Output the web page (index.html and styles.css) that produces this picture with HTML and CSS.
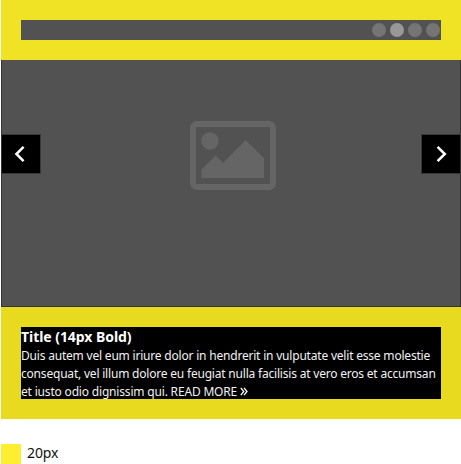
FILE: index.html
```html
<!DOCTYPE html>
<html lang="en">
<head>
<meta charset="utf-8">
<title>Carousel</title>
<link rel="stylesheet" href="styles.css">
</head>
<body>
<section class="carousel">
  <header class="header">
    <div class="pager"><i class="dot"></i><i class="dot active"></i><i class="dot"></i><i class="dot"></i></div>
  </header>
  <div class="slide">
    <button class="arrow" aria-label="Previous"><svg width="38" height="38" viewBox="0 0 38 38"><path d="M21.6 11.8 14.4 19l7.2 7.2"/></svg></button>
    <svg class="picture" width="86" height="69" viewBox="0 0 86 69">
      <rect class="frame" x="3" y="3" width="80" height="63" rx="4"/>
      <circle cx="20" cy="20" r="8.7"/>
      <path d="M11.5 57V48.5L25.7 34.5 33 42 55.7 19 74 37V57Z"/>
    </svg>
    <button class="arrow" aria-label="Next"><svg width="38" height="38" viewBox="0 0 38 38"><path d="M15.6 11.8 22.8 19l-7.2 7.2"/></svg></button>
  </div>
  <div class="caption">
    <div class="text">
      <h2 class="title">Title (14px Bold)</h2>
      <p class="line first">Duis autem vel eum iriure dolor in hendrerit in vulputate velit esse molestie</p>
      <p class="line second">consequat, vel illum dolore eu feugiat nulla facilisis at vero eros et accumsan</p>
      <p class="line third">et iusto odio dignissim qui. READ MORE<svg class="more" width="8" height="9" viewBox="0 0 8 9"><path d="M.8.8 3.8 4.5.8 8.2M4 .8 7 4.5 4 8.2"/></svg></p>
    </div>
  </div>
</section>
<div class="legend"><i class="swatch"></i><span class="size">20px</span></div>
</body>
</html>
```
FILE: styles.css
```css
* { box-sizing: border-box; }
body {
  margin: 0;
  padding-left: 1px;
  height: 464px;
  overflow: hidden;
  background: #fff;
  font-family: "Noto Sans", sans-serif;
}
.header { height: 60px; padding: 20px; background: #f0e225; }
.pager {
  height: 20px;
  display: flex;
  justify-content: flex-end;
  align-items: center;
  gap: 4px;
  padding-right: 1px;
  background: #525252;
}
.dot { width: 14px; height: 14px; border-radius: 50%; background: #757575; }
.dot.active { background: #989898; }
.slide {
  height: 247px;
  display: flex;
  justify-content: space-between;
  align-items: flex-start;
  background: #525252;
  border: solid #333;
  border-width: 0 1px 1px;
}
.arrow {
  width: 39px;
  height: 40px;
  margin: 74px 0 0;
  padding: 0;
  background: #000;
  border: 1px solid #383838;
  border-left-width: 0;
}
.arrow:last-child { border-width: 1px 0 1px 1px; }
.arrow svg { display: block; fill: none; stroke: #fff; stroke-width: 2.5; }
.picture { margin: 61px 0 0 4px; fill: #656565; }
.frame { fill: none; stroke: #656565; stroke-width: 6; }
.caption { height: 112px; padding: 20px; background: #e8da1e; }
.text { height: 72px; background: #000; color: #fff; white-space: nowrap; }
.title { margin: 0; font-size: 14px; line-height: 20px; height: 20px; letter-spacing: -0.05px; }
.line { margin: 0; font-size: 12px; line-height: 18px; height: 18px; color: #f2f2f2; }
.first { letter-spacing: -0.2px; }
.second { letter-spacing: -0.2px; }
.third { letter-spacing: -0.18px; height: 16px; }
.more { margin-left: 3px; fill: none; stroke: #fff; stroke-width: 1.3; }
.legend { display: flex; align-items: center; gap: 6px; height: 20px; margin-top: 25px; }
.swatch { width: 20px; height: 20px; background: #fdee30; }
.size { font-size: 14px; line-height: 18px; margin-top: -2px; color: #111; letter-spacing: -0.1px; }
```
